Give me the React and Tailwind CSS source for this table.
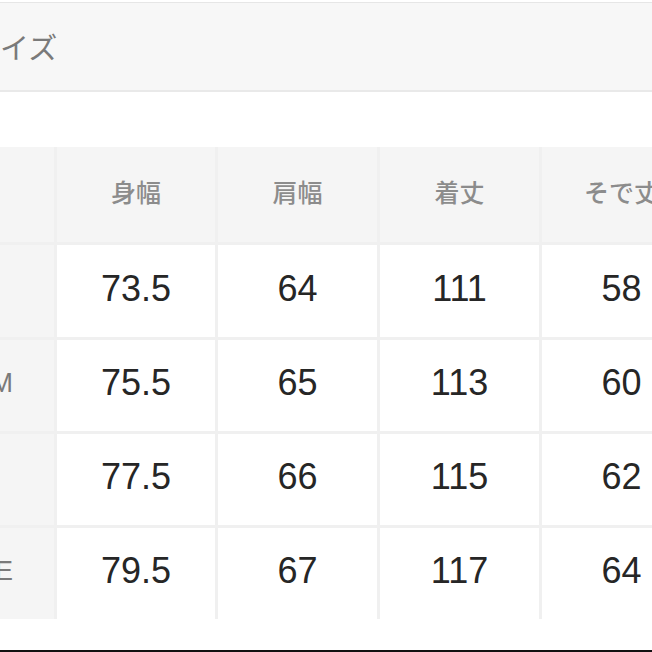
const heads = ['身幅', '肩幅', '着丈', 'そで丈'];

const rows = [
  { label: '', values: ['73.5', '64', '111', '58'] },
  { label: 'M', values: ['75.5', '65', '113', '60'] },
  { label: '', values: ['77.5', '66', '115', '62'] },
  { label: 'E', values: ['79.5', '67', '117', '64'] },
];

export default function App() {
  return (
    <div className="h-[652px] w-[652px] overflow-hidden bg-white flex flex-col" style={{ fontFamily: '"Liberation Sans", "Noto Sans CJK JP", sans-serif' }}>
      <div className="mt-[2px] h-[90px] shrink-0 bg-[#f7f7f7] border-t border-[#e6e6e6] border-b-2 border-b-[#e9e9e9] flex items-center">
        <span className="-ml-[29px] text-[29px] leading-none text-[#7a7a7a] whitespace-nowrap" style={{ fontFamily: '"Noto Sans CJK JP", sans-serif' }}>
          サイズ
        </span>
      </div>

      <div className="mt-[55px] w-[730px] grid grid-cols-[54px_158px_159px_159px_159px] grid-rows-[95px_92px_91px_91px_91px] gap-[3px] bg-[#f0f0f0] shrink-0">
        <div className="bg-[#f5f5f5]" />
        {heads.map((h) => (
          <div key={h} className="bg-[#f5f5f5] flex items-center justify-center pb-[5px] text-[25px] font-medium text-[#8c8c8c] whitespace-nowrap" style={{ fontFamily: '"Noto Sans CJK JP", sans-serif' }}>
            {h}
          </div>
        ))}
        {rows.map((r, i) => (
          <div key={i} className="contents">
            <div className="bg-[#f5f5f5] flex items-center justify-end pr-[41px] pb-[4px] text-[27px] text-[#7a7a7a] whitespace-nowrap">
              {r.label}
            </div>
            {r.values.map((v, j) => (
              <div key={j} className="bg-white flex items-center justify-center pb-[5px] text-[36px] text-[#262626]">
                {v}
              </div>
            ))}
          </div>
        ))}
      </div>

      <div className="flex-1" />
      <div className="h-[2px] bg-[#111] shrink-0" />
    </div>
  );
}
